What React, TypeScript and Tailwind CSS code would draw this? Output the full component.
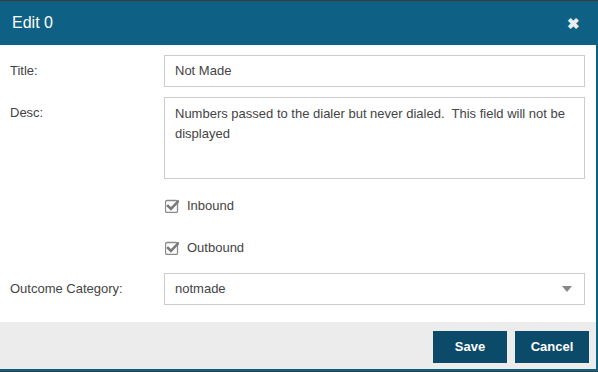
import React from 'react';

const font = { fontFamily: '"Liberation Sans", Arial, sans-serif' };

const CheckIcon: React.FC = () => (
    <svg width="14" height="14" viewBox="0 0 14 14">
        <rect x="0.5" y="1.5" width="12" height="12" rx="1.5" fill="none" stroke="#8a8a8a" strokeWidth="1.3" />
        <path d="M3 7 L6 10 L13 2.5" fill="none" stroke="#7a7a7a" strokeWidth="2.6" strokeLinecap="square" />
    </svg>
);

const App: React.FC = () => {
    return (
        <div style={font} className="w-[598px] h-[372px] bg-[#3b3b3b] pt-px">
            <div className="flex flex-col h-[370px] border-r-2 border-b-2 border-[#0e6084] bg-white">
                <div className="h-[44px] bg-[#0e6084] flex items-center justify-between pl-[12px] pr-[16px]">
                    <span className="text-white text-[16px]">Edit 0</span>
                    <span className="text-[#e8eef2] text-[15px] font-bold leading-none">✖</span>
                </div>
                <div className="flex-1 pt-[10px] text-[13px] text-[#444]">
                    <div className="flex items-center h-[32px]">
                        <label className="w-[164px] pl-[10px]">Title:</label>
                        <div className="w-[421px] h-[32px] border border-[#ccc] flex items-center px-[10px]">Not Made</div>
                    </div>
                    <div className="flex mt-[10px]">
                        <label className="w-[164px] pl-[10px] pt-[6px]">Desc:</label>
                        <div className="w-[421px] h-[82px] border border-[#ccc] px-[10px] pt-[6px] leading-[20px]">
                            Numbers passed to the dialer but never dialed.&nbsp; This field will not be displayed
                        </div>
                    </div>
                    <div className="flex items-center gap-[8px] ml-[165px] mt-[19px] h-[16px]">
                        <CheckIcon />
                        <span>Inbound</span>
                    </div>
                    <div className="flex items-center gap-[8px] ml-[165px] mt-[26px] h-[16px]">
                        <CheckIcon />
                        <span>Outbound</span>
                    </div>
                    <div className="flex items-center h-[32px] mt-[17px]">
                        <label className="w-[164px] pl-[10px]">Outcome Category:</label>
                        <div className="w-[421px] h-[32px] border border-[#ccc] flex items-center justify-between pl-[10px] pr-[12px]">
                            <span>notmade</span>
                            <svg width="10" height="6" viewBox="0 0 10 6"><path d="M0 0 H10 L5 6 Z" fill="#888" /></svg>
                        </div>
                    </div>
                </div>
                <div className="h-[47px] bg-[#ececec] flex items-center justify-end gap-[8px] pr-[7px] pt-[2px]">
                    <button className="w-[74px] h-[32px] bg-[#0b4a69] text-white text-[13px] font-bold">Save</button>
                    <button className="w-[74px] h-[32px] bg-[#0b4a69] text-white text-[13px] font-bold">Cancel</button>
                </div>
            </div>
        </div>
    );
};

export default App;
